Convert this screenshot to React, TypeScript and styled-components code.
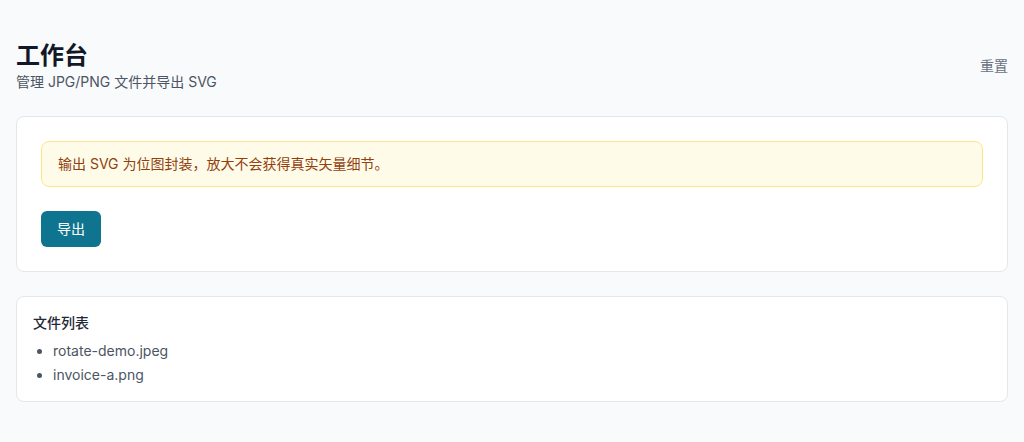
import { createGlobalStyle, styled } from 'styled-components'

const GlobalStyle = createGlobalStyle`
  * {
    box-sizing: border-box;
  }
  body {
    margin: 0;
    background: #f9fafb;
    font-family: Inter, "Noto Sans CJK SC", sans-serif;
    color: #111827;
  }
`

const files = ['rotate-demo.jpeg', 'invoice-a.png']

export default function App() {
  return (
    <>
      <GlobalStyle />
      <Page>
        <Header>
          <div>
            <Title>工作台</Title>
            <Subtitle>管理 JPG/PNG 文件并导出 SVG</Subtitle>
          </div>
          <ResetButton type="button">重置</ResetButton>
        </Header>

        <Card $pad="24px">
          <Alert>输出 SVG 为位图封装，放大不会获得真实矢量细节。</Alert>
          <ExportButton type="button">导出</ExportButton>
        </Card>

        <Card $pad="16px 16px 14px">
          <CardTitle>文件列表</CardTitle>
          <FileList>
            {files.map((name) => (
              <li key={name}>{name}</li>
            ))}
          </FileList>
        </Card>
      </Page>
    </>
  )
}

const Page = styled.div`
  display: flex;
  flex-direction: column;
  gap: 24px;
  padding: 40px 16px;
`

const Header = styled.header`
  display: flex;
  justify-content: space-between;
  align-items: center;
`

const Title = styled.h1`
  margin: 0;
  font-size: 24px;
  line-height: 32px;
  font-weight: 700;
  color: #111827;
`

const Subtitle = styled.p`
  margin: 0;
  font-size: 14px;
  line-height: 20px;
  color: #4b5563;
`

const ResetButton = styled.button`
  background: none;
  border: none;
  padding: 0;
  font-family: inherit;
  font-size: 14px;
  line-height: 20px;
  color: #6b7280;
  cursor: pointer;
`

const Card = styled.section<{ $pad: string }>`
  background: #fff;
  border: 1px solid #e5e7eb;
  border-radius: 8px;
  padding: ${(p) => p.$pad};
`

const Alert = styled.div`
  padding: 12px 16px;
  background: #fefce8;
  border: 1px solid #fde68a;
  border-radius: 8px;
  font-size: 14px;
  line-height: 20px;
  color: #92400e;
`

const ExportButton = styled.button`
  margin-top: 24px;
  height: 36px;
  padding: 0 16px;
  border: none;
  border-radius: 6px;
  background: #0e7490;
  color: #fff;
  font-family: inherit;
  font-size: 14px;
  line-height: 20px;
  font-weight: 400;
  cursor: pointer;
`

const CardTitle = styled.h2`
  margin: 0 0 6px;
  font-size: 14px;
  line-height: 20px;
  font-weight: 500;
  color: #1f2937;
`

const FileList = styled.ul`
  margin: 0;
  padding-left: 20px;
  list-style: disc;
  font-size: 14px;
  line-height: 24px;
  color: #4b5563;
`
